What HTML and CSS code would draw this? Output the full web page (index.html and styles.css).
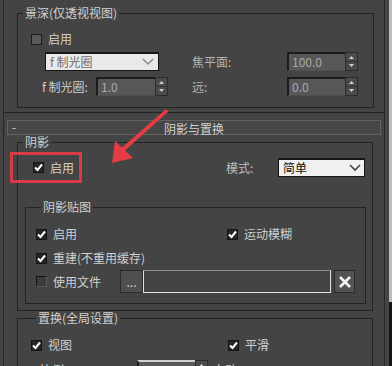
FILE: index.html
```html
<!DOCTYPE html>
<html lang="zh-CN">
<head>
  <meta charset="UTF-8" />
  <title>阴影与置换</title>
  <link rel="stylesheet" href="styles.css">
</head>
<body>
  <div class="main">
    <div class="rollout-top">
      <fieldset class="group g-dof">
        <legend>景深(仅透视视图)</legend>
        <div class="row r1">
          <label class="chk off"><span class="box"></span>启用</label>
        </div>
        <div class="row r2">
          <div class="dof-left">
            <div class="select dim">f 制光圈
              <svg class="chev" width="12" height="8" viewBox="0 0 12 8"><polyline points="1,1 6,6 11,1" fill="none" stroke="#8a8a8a" stroke-width="1.5"/></svg>
            </div>
          </div>
          <span class="lbl dof-lbl dim-text">焦平面:</span>
          <div class="spin"><span class="field w58">100.0</span><span class="arrows"><svg width="11" height="17" viewBox="0 0 11 17"><polygon points="5.5,3 8,6 3,6" fill="#cfcfcf"/><line x1="0" y1="8.5" x2="11" y2="8.5" stroke="#333"/><polygon points="3,11 8,11 5.5,14" fill="#cfcfcf"/></svg></span></div>
        </div>
        <div class="row r3">
          <div class="dof-left">
            <span class="lbl f-lbl">f 制光圈:</span>
            <div class="spin"><span class="field w59">1.0</span><span class="arrows"><svg width="11" height="17" viewBox="0 0 11 17"><polygon points="5.5,3 8,6 3,6" fill="#cfcfcf"/><line x1="0" y1="8.5" x2="11" y2="8.5" stroke="#333"/><polygon points="3,11 8,11 5.5,14" fill="#cfcfcf"/></svg></span></div>
          </div>
          <span class="lbl dof-lbl dim-text">远:</span>
          <div class="spin"><span class="field w58">0.0</span><span class="arrows"><svg width="11" height="17" viewBox="0 0 11 17"><polygon points="5.5,3 8,6 3,6" fill="#cfcfcf"/><line x1="0" y1="8.5" x2="11" y2="8.5" stroke="#333"/><polygon points="3,11 8,11 5.5,14" fill="#cfcfcf"/></svg></span></div>
        </div>
      </fieldset>
    </div>

    <div class="roll-head"><span class="minus">-</span><span class="roll-title">阴影与置换</span></div>

    <fieldset class="group g-shadow">
      <legend>阴影</legend>
      <div class="row r-mode">
        <div class="mode-left"><label class="chk on"><span class="box"><svg width="9" height="9" viewBox="0 0 9 9"><polyline points="1,4.5 3.5,7 8,1.5" fill="none" stroke="#fff" stroke-width="2"/></svg></span>启用</label></div>
        <span class="lbl mode-lbl">模式:</span>
        <div class="select light">简单
          <svg class="chev" width="12" height="8" viewBox="0 0 12 8"><polyline points="1,1 6,6 11,1" fill="none" stroke="#444" stroke-width="1.6"/></svg>
        </div>
      </div>

      <fieldset class="group g-map">
        <legend>阴影贴图</legend>
        <div class="row r-a">
          <div class="map-left"><label class="chk on"><span class="box"><svg width="9" height="9" viewBox="0 0 9 9"><polyline points="1,4.5 3.5,7 8,1.5" fill="none" stroke="#fff" stroke-width="2"/></svg></span>启用</label></div>
          <label class="chk on"><span class="box"><svg width="9" height="9" viewBox="0 0 9 9"><polyline points="1,4.5 3.5,7 8,1.5" fill="none" stroke="#fff" stroke-width="2"/></svg></span>运动模糊</label>
        </div>
        <div class="row r-b">
          <label class="chk on"><span class="box"><svg width="9" height="9" viewBox="0 0 9 9"><polyline points="1,4.5 3.5,7 8,1.5" fill="none" stroke="#fff" stroke-width="2"/></svg></span>重建(不重用缓存)</label>
        </div>
        <div class="row r-c">
          <div class="file-left"><label class="chk off"><span class="box"></span>使用文件</label></div>
          <span class="btn dots">...</span>
          <span class="file-field"></span>
          <span class="btn xbtn"><svg width="14" height="14" viewBox="0 0 14 14"><line x1="2" y1="2" x2="12" y2="12" stroke="#f2f2f2" stroke-width="2.6"/><line x1="12" y1="2" x2="2" y2="12" stroke="#f2f2f2" stroke-width="2.6"/></svg></span>
        </div>
      </fieldset>
    </fieldset>

    <fieldset class="group g-disp">
      <legend>置换(全局设置)</legend>
      <div class="row r-a">
        <div class="disp-left"><label class="chk on"><span class="box"><svg width="9" height="9" viewBox="0 0 9 9"><polyline points="1,4.5 3.5,7 8,1.5" fill="none" stroke="#fff" stroke-width="2"/></svg></span>视图</label></div>
        <label class="chk on"><span class="box"><svg width="9" height="9" viewBox="0 0 9 9"><polyline points="1,4.5 3.5,7 8,1.5" fill="none" stroke="#fff" stroke-width="2"/></svg></span>平滑</label>
      </div>
      <div class="row r-scale">
        <span class="lbl scale-lbl">比例:</span>
        <div class="spin"><span class="field w58 bright">2.0</span><span class="arrows"><svg width="11" height="17" viewBox="0 0 11 17"><polygon points="5.5,3 8,6 3,6" fill="#e0e0e0"/><line x1="0" y1="8.5" x2="11" y2="8.5" stroke="#333"/><polygon points="3,11 8,11 5.5,14" fill="#e0e0e0"/></svg></span></div>
        <span class="lbl auto-lbl">自动</span>
      </div>
    </fieldset>
  </div>

  <div class="scroll"><div class="thumb"></div><div class="track"></div></div>

  <div class="mark-box"></div>
  <svg class="arrow" width="392" height="366" viewBox="0 0 392 366">
    <polygon points="166,109 168.5,111.5 125,150.5 133,158 112,163 115,141 122,147.5" fill="#e53b42"/>
  </svg>
</body>
</html>
```

FILE: styles.css
```css
body {
  margin: 0;
  width: 392px;
  height: 366px;
  overflow: hidden;
  display: flex;
  position: relative;
  background: #444444;
  color: #d0d0d0;
  font-family: "Noto Sans CJK SC", "Noto Sans", sans-serif;
  font-size: 12px;
  line-height: 14px;
}
.main {
  margin-left: 3px;
  width: 382px;
  height: 366px;
  box-sizing: border-box;
  border-left: 1px solid #272727;
  border-right: 1px solid #272727;
}
.scroll {
  width: 3px;
  margin-left: 4px;
  display: flex;
  flex-direction: column;
}
.thumb {
  height: 302px;
  background: #bdbdbd;
}
.track {
  flex: 1;
  background: #141414;
}

/* group boxes */
.group {
  margin: 0;
  padding: 0;
  min-width: 0;
  border: 1px solid #242424;
  box-sizing: border-box;
}
.group legend {
  padding: 0 2px;
  margin-left: 5px;
  line-height: 14px;
}
.row {
  display: flex;
  align-items: center;
}

/* top rollout */
.rollout-top {
  padding: 6px 0 4px;
  border-bottom: 1px solid #232323;
}
.g-dof {
  margin-left: 13px;
  width: 357px;
  padding: 13px 0 11px;
}
.g-dof .r1 { height: 12px; padding-left: 13px; }
.g-dof .r2 { height: 19px; margin-top: 7px; }
.g-dof .r3 { height: 19px; margin-top: 6px; }
.dof-left {
  width: 174px;
  display: flex;
  align-items: center;
}
.r2 .select { margin-left: 27px; }
.dof-lbl { width: 95px; }
.f-lbl { width: 54px; margin-left: 24px; }
.dim-text { color: #b4b4b4; }

/* controls */
.chk {
  display: flex;
  align-items: center;
  white-space: nowrap;
}
.box {
  width: 11px;
  height: 11px;
  box-sizing: border-box;
  margin-right: 6px;
  border: 1px solid #151515;
  display: flex;
  align-items: center;
  justify-content: center;
}
.chk.on .box { background: #262626; }
.chk.off .box {
  background: #3c3c3c;
  border-right-color: #5a5a5a;
  border-bottom-color: #5a5a5a;
}
.g-dof .chk.off .box { background: #5a5a5a; border-color: #1c1c1c; }
.select {
  width: 114px;
  height: 19px;
  box-sizing: border-box;
  border: 1px solid #161616;
  border-top-width: 2px;
  padding: 0 4px;
  display: flex;
  align-items: center;
  justify-content: space-between;
}
.select.dim { background: #e9e9e9; color: #6e6e6e; }
.select.light { width: 87px; background: #f0f0f0; color: #111; padding-right: 3px; }
.spin {
  display: flex;
  height: 19px;
}
.field {
  box-sizing: border-box;
  background: #575757;
  color: #a8a8a8;
  border-top: 2px solid #1c1c1c;
  border-left: 2px solid #1c1c1c;
  border-bottom: 1px solid #505050;
  padding-left: 3px;
  line-height: 16px;
}
.field.bright { background: #5a5a5a; color: #e0e0e0; border-top-color: #cfcfcf; }
.w58 { width: 58px; }
.w59 { width: 59px; }
.arrows {
  width: 13px;
  box-sizing: border-box;
  background: #4b4b4b;
  border: 1px solid #2c2c2c;
  display: flex;
}

/* rollout header */
.roll-head {
  margin: 7px 0 0 3px;
  width: 374px;
  height: 15px;
  box-sizing: border-box;
  border: 1px solid #626262;
  background: #474747;
  display: flex;
  align-items: center;
}
.minus {
  width: 10px;
  margin-left: 4px;
  line-height: 12px;
  align-self: flex-start;
}
.roll-title {
  flex: 1;
  margin-right: 14px;
  text-align: center;
  line-height: 13px;
  padding-top: 1px;
}

/* shadow group */
.g-shadow {
  margin-left: 13px;
  width: 356px;
  padding: 9px 0 6px;
}
.r-mode { height: 19px; }
.mode-left { width: 208px; padding-left: 15px; box-sizing: border-box; }
.mode-lbl { width: 52px; color: #bdbdbd; }
.g-map {
  margin: 23px 0 0 7px;
  width: 341px;
  padding: 14px 0 10px 10px;
}
.g-map .r-a { height: 12px; }
.g-map .r-b { height: 12px; margin-top: 12px; }
.g-map .r-c { height: 23px; margin-top: 6px; }
.map-left { width: 191px; }
.file-left { width: 84px; }
.btn {
  height: 23px;
  box-sizing: border-box;
  background: #4f4f4f;
  border: 1px solid #2a2a2a;
  display: flex;
  align-items: center;
  justify-content: center;
}
.dots { width: 23px; color: #cfcfcf; }
.file-field {
  width: 188px;
  height: 23px;
  box-sizing: border-box;
  background: #444;
  border: 1px solid #e2e2e2;
  border-top-color: #8c8c8c;
}
.xbtn { width: 21px; margin-left: 3px; background: #535353; }

/* displacement group */
.g-disp {
  margin-left: 13px;
  width: 356px;
  padding: 14px 0 0 13px;
}
.g-disp .r-a { height: 12px; }
.disp-left { width: 197px; }
.r-scale { height: 19px; margin-top: 9px; }
.scale-lbl { width: 106px; padding-left: 9px; box-sizing: border-box; }
.auto-lbl { margin-left: 5px; }

/* annotation overlay */
.mark-box {
  position: absolute;
  left: 10px;
  top: 152px;
  width: 72px;
  height: 31px;
  box-sizing: border-box;
  border: 3px solid #d63c43;
}
.arrow {
  position: absolute;
  left: 0;
  top: 0;
}
```
